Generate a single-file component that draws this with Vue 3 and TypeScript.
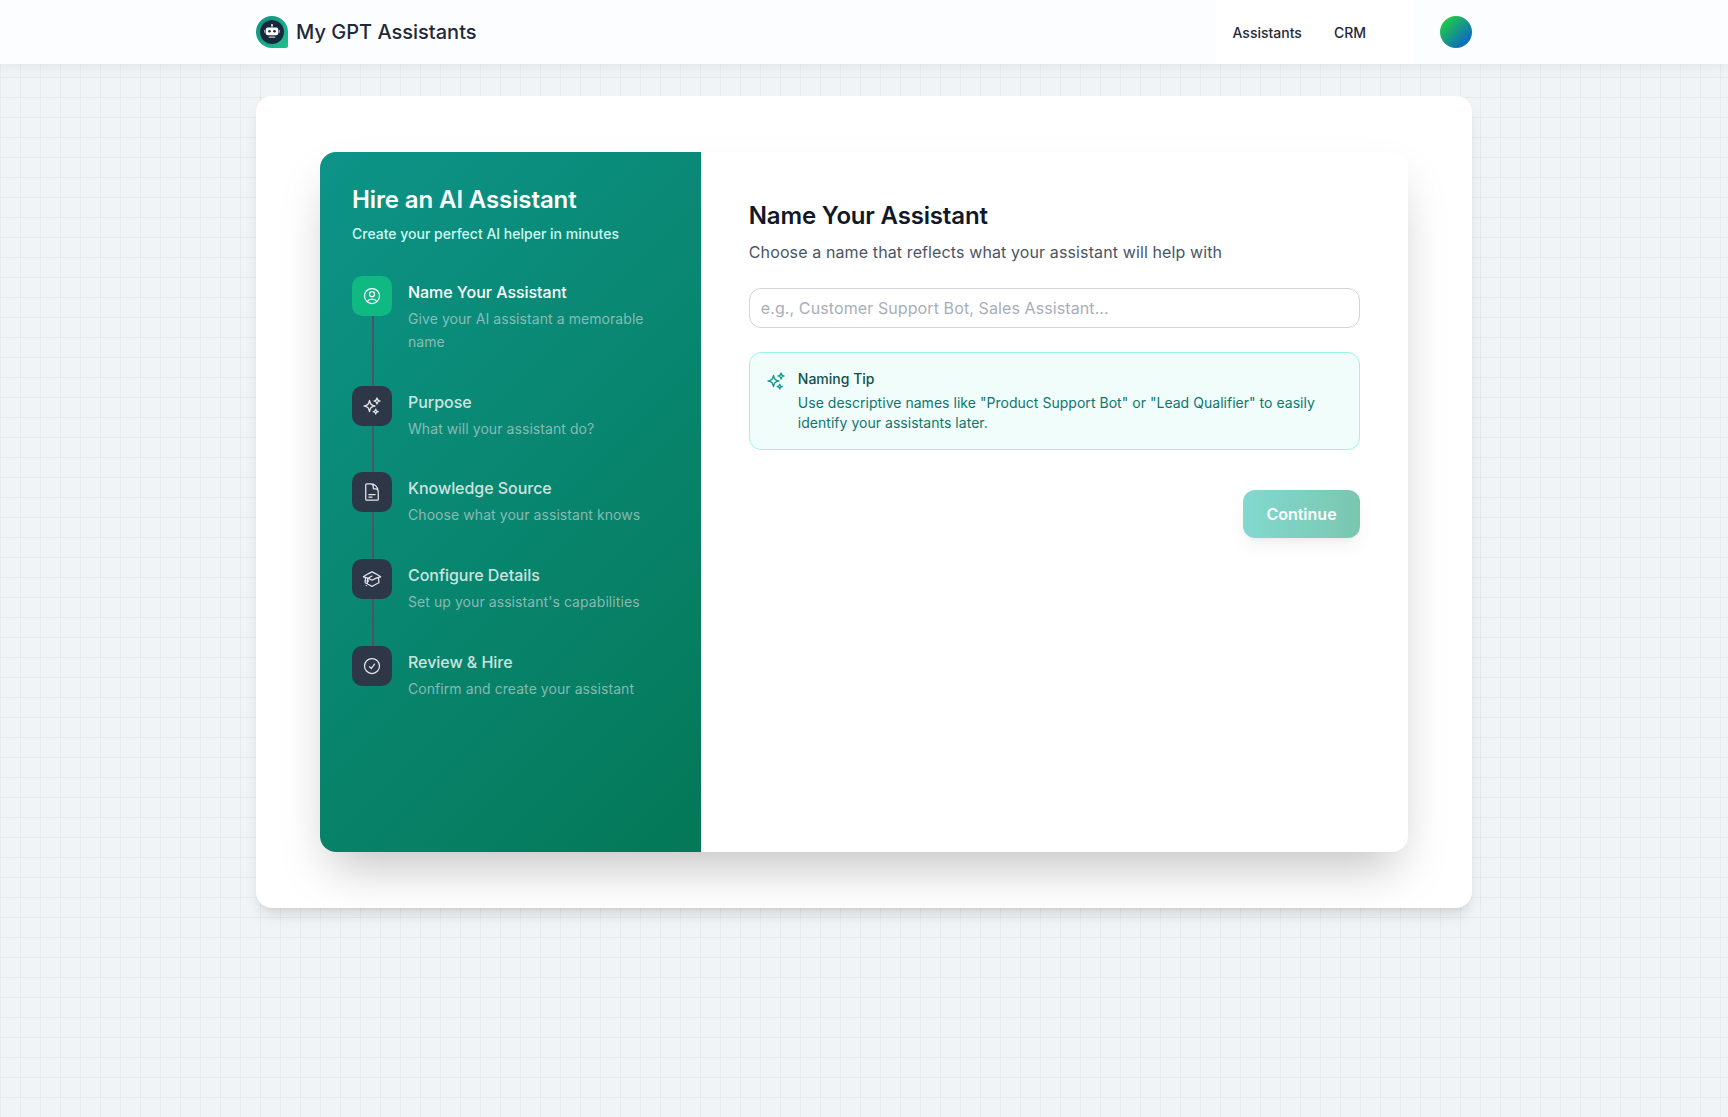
<script setup lang="ts">
interface Step {
  title: string
  desc: string
  icon: string
}

const steps: Step[] = [
  {
    title: 'Name Your Assistant',
    desc: 'Give your AI assistant a memorable name',
    icon: 'M17.982 18.725A7.488 7.488 0 0012 15.75a7.488 7.488 0 00-5.982 2.975m11.963 0a9 9 0 10-11.963 0m11.963 0A8.966 8.966 0 0112 21a8.966 8.966 0 01-5.982-2.275M15 9.75a3 3 0 11-6 0 3 3 0 016 0z',
  },
  {
    title: 'Purpose',
    desc: 'What will your assistant do?',
    icon: 'M9.813 15.904L9 18.75l-.813-2.846a4.5 4.5 0 00-3.09-3.09L2.25 12l2.846-.813a4.5 4.5 0 003.09-3.09L9 5.25l.813 2.846a4.5 4.5 0 003.09 3.09L15.75 12l-2.846.813a4.5 4.5 0 00-3.09 3.09zM18.259 8.715L18 9.75l-.259-1.035a3.375 3.375 0 00-2.455-2.456L14.25 6l1.036-.259a3.375 3.375 0 002.455-2.456L18 2.25l.259 1.035a3.375 3.375 0 002.456 2.456L21.75 6l-1.035.259a3.375 3.375 0 00-2.456 2.456zM16.894 20.567L16.5 21.75l-.394-1.183a2.25 2.25 0 00-1.423-1.423L13.5 18.75l1.183-.394a2.25 2.25 0 001.423-1.423l.394-1.183.394 1.183a2.25 2.25 0 001.423 1.423l1.183.394-1.183.394a2.25 2.25 0 00-1.423 1.423z',
  },
  {
    title: 'Knowledge Source',
    desc: 'Choose what your assistant knows',
    icon: 'M19.5 14.25v-2.625a3.375 3.375 0 00-3.375-3.375h-1.5A1.125 1.125 0 0113.5 7.125v-1.5a3.375 3.375 0 00-3.375-3.375H8.25m0 12.75h7.5m-7.5 3H12M10.5 2.25H5.625c-.621 0-1.125.504-1.125 1.125v17.25c0 .621.504 1.125 1.125 1.125h12.75c.621 0 1.125-.504 1.125-1.125V11.25a9 9 0 00-9-9z',
  },
  {
    title: 'Configure Details',
    desc: "Set up your assistant's capabilities",
    icon: 'M4.26 10.147a60.436 60.436 0 00-.491 6.347A48.627 48.627 0 0112 20.904a48.627 48.627 0 018.232-4.41 60.46 60.46 0 00-.491-6.347m-15.482 0a50.57 50.57 0 00-2.658-.813A59.905 59.905 0 0112 3.493a59.902 59.902 0 0110.399 5.84c-.896.248-1.783.52-2.658.814m-15.482 0A50.697 50.697 0 0112 13.489a50.702 50.702 0 017.74-3.342M6.75 15a.75.75 0 100-1.5.75.75 0 000 1.5zm0 0v-3.675A55.378 55.378 0 0112 8.443m-7.007 11.55A5.981 5.981 0 006.75 15.75v-1.5',
  },
  {
    title: 'Review & Hire',
    desc: 'Confirm and create your assistant',
    icon: 'M9 12.75L11.25 15 15 9.75M21 12a9 9 0 11-18 0 9 9 0 0118 0z',
  },
]
const sparkle = steps[1].icon
</script>

<template>
  <div class="page">
    <header class="header">
      <div class="header-inner">
        <div class="brand">
          <div class="logo">
            <div class="logo-core">
              <svg viewBox="0 0 24 24" width="20" height="20" fill="#fff">
                <rect x="11.4" y="3.5" width="1.2" height="3" />
                <circle cx="12" cy="3.4" r="1.1" />
                <rect x="4.5" y="6.5" width="15" height="9.5" rx="2.5" />
                <rect x="2.8" y="9.5" width="1.2" height="3.5" rx=".6" opacity=".8" />
                <rect x="20" y="9.5" width="1.2" height="3.5" rx=".6" opacity=".8" />
                <circle cx="9" cy="11" r="1.5" fill="#14293c" />
                <circle cx="15" cy="11" r="1.5" fill="#14293c" />
                <rect x="8" y="17.5" width="8" height="1.4" rx=".7" opacity=".75" />
              </svg>
            </div>
          </div>
          <span class="brand-name">My GPT Assistants</span>
        </div>
        <nav class="nav">
          <a class="nav-link">Assistants</a>
          <a class="nav-link">CRM</a>
        </nav>
        <div class="avatar"></div>
      </div>
    </header>

    <main class="main">
      <section class="outer-card">
        <div class="wizard">
          <aside class="side">
            <h1 class="side-title">Hire an AI Assistant</h1>
            <p class="side-sub">Create your perfect AI helper in minutes</p>
            <ol class="steps">
              <li
                v-for="(step, i) in steps"
                :key="step.title"
                class="step"
                :class="{ active: i === 0, last: i === steps.length - 1 }"
              >
                <div class="step-icon">
                  <svg viewBox="0 0 24 24" width="20" height="20" fill="none" stroke="currentColor" stroke-width="1.5" stroke-linecap="round" stroke-linejoin="round">
                    <path :d="step.icon" />
                  </svg>
                </div>
                <div class="step-text">
                  <div class="step-title">{{ step.title }}</div>
                  <div class="step-desc">{{ step.desc }}</div>
                </div>
              </li>
            </ol>
          </aside>

          <div class="content">
            <h2 class="content-title">Name Your Assistant</h2>
            <p class="content-sub">Choose a name that reflects what your assistant will help with</p>
            <input class="name-input" type="text" placeholder="e.g., Customer Support Bot, Sales Assistant..." />
            <div class="tip">
              <svg class="tip-icon" viewBox="0 0 24 24" width="20" height="20" fill="none" stroke="currentColor" stroke-width="1.5" stroke-linecap="round" stroke-linejoin="round">
                <path :d="sparkle" />
              </svg>
              <div>
                <div class="tip-title">Naming Tip</div>
                <p class="tip-body">Use descriptive names like "Product Support Bot" or "Lead Qualifier" to easily identify your assistants later.</p>
              </div>
            </div>
            <div class="actions">
              <button class="continue" type="button">Continue</button>
            </div>
          </div>
        </div>
      </section>
    </main>
  </div>
</template>

<style>
html, body { margin: 0; padding: 0; }
</style>

<style scoped>
* { box-sizing: border-box; }
.page {
  min-height: 1117px;
  font-family: Inter, "Liberation Sans", sans-serif;
  background-color: #f1f4f6;
  background-image:
    linear-gradient(rgba(90, 105, 125, .07) 1px, transparent 1px),
    linear-gradient(90deg, rgba(90, 105, 125, .07) 1px, transparent 1px);
  background-size: 20px 20px;
  background-position: 0 -3px, 0 0;
}
.header {
  height: 64px;
  background: #fcfdfe;
  box-shadow: 0 4px 12px rgba(0, 0, 0, .05);
  position: relative;
}
.header-inner {
  width: 1216px;
  height: 100%;
  margin: 0 auto;
  display: flex;
  align-items: center;
}
.brand { display: flex; align-items: center; gap: 8px; flex: 1; }
.logo {
  width: 32px;
  height: 32px;
  border-radius: 50% 50% 2px 50%;
  background: linear-gradient(135deg, #0f8f80, #1fc08f);
  display: flex;
  align-items: center;
  justify-content: center;
}
.logo-core {
  width: 24px;
  height: 24px;
  border-radius: 50%;
  background: #14293c;
  display: flex;
  align-items: center;
  justify-content: center;
}
.brand-name { font-size: 20px; font-weight: 500; color: #1f2937; }
.nav {
  display: flex;
  align-self: stretch;
  align-items: center;
  gap: 32px;
  padding: 0 48px 0 16px;
  background: #fff;
  margin-right: 26px;
}
.nav-link { font-size: 14px; font-weight: 500; color: #1f2937; }
.avatar {
  width: 32px;
  height: 32px;
  border-radius: 50%;
  background: linear-gradient(135deg, #22d040 10%, #0b5fd0 90%);
}
.main { width: 1216px; margin: 0 auto; padding-top: 32px; }
.outer-card {
  background: #fff;
  border-radius: 16px;
  padding: 56px 64px;
  box-shadow: 0 10px 15px -3px rgba(0, 0, 0, .1), 0 4px 6px -4px rgba(0, 0, 0, .1);
}
.wizard {
  display: flex;
  height: 700px;
  border-radius: 16px;
  overflow: hidden;
  background: #fff;
  box-shadow: 0 25px 50px -12px rgba(0, 0, 0, .25);
}
.side {
  width: 35%;
  padding: 32px;
  color: #fff;
  background: linear-gradient(135deg, #0d9488, #047857);
}
.side-title { margin: 0; font-size: 24px; line-height: 32px; font-weight: 600; letter-spacing: -.11px; }
.side-sub { margin: 8px 0 0; font-size: 14px; line-height: 20px; font-weight: 500; color: #ccfbf1; }
.steps { list-style: none; margin: 32px 0 0; padding: 0; }
.step { position: relative; display: flex; gap: 16px; padding-bottom: 32px; }
.step:not(.last)::before {
  content: "";
  position: absolute;
  left: 20px;
  top: 40px;
  bottom: 0;
  width: 2px;
  background: #4b5563;
}
.step-icon {
  flex: none;
  width: 40px;
  height: 40px;
  border-radius: 10px;
  background: #2d3748;
  color: #e5e7eb;
  display: flex;
  align-items: center;
  justify-content: center;
}
.step.active .step-icon { background: #10b981; color: #fff; }
.step-text { padding-top: 4px; }
.step-title { font-size: 16px; line-height: 24px; font-weight: 550; letter-spacing: -.04px; color: rgba(255, 255, 255, .8); }
.step.active .step-title { color: #fff; }
.step-desc { margin-top: 4px; font-size: 14px; line-height: 22.75px; letter-spacing: .07px; color: rgba(205, 215, 220, .66); }
.content { flex: 1; padding: 48px; }
.content-title { margin: 0; font-size: 24px; line-height: 32px; font-weight: 600; letter-spacing: -.17px; color: #111827; }
.content-sub { margin: 8px 0 0; font-size: 16px; line-height: 24px; letter-spacing: .115px; color: #4b5563; }
.name-input {
  display: block;
  width: 100%;
  height: 40px;
  margin-top: 24px;
  padding: 0 11px;
  border: 1px solid #d1d5db;
  border-radius: 12px;
  font: 400 16px Inter, "Liberation Sans", sans-serif;
  letter-spacing: .1px;
  color: #111827;
  background: #fff;
  outline: none;
}
.name-input::placeholder { color: #a8aeb8; opacity: 1; }
.tip {
  display: flex;
  gap: 12px;
  margin-top: 24px;
  padding: 16px;
  border: 1px solid #99f6e4;
  border-radius: 12px;
  background: #f0fdfa;
}
.tip-icon { flex: none; color: #0d9488; margin-top: 2px; }
.tip-title { font-size: 14px; line-height: 20px; font-weight: 500; color: #134e4a; }
.tip-body { margin: 4px 0 0; font-size: 14px; line-height: 20px; letter-spacing: .03px; color: #0f766e; }
.actions { display: flex; justify-content: flex-end; margin-top: 40px; }
.continue {
  width: 117px;
  height: 48px;
  border: 0;
  border-radius: 12px;
  font: 600 16px Inter, "Liberation Sans", sans-serif;
  color: #fff;
  background: linear-gradient(90deg, #14b8a6, #059669);
  opacity: .53;
  box-shadow: 0 10px 15px -3px rgba(0, 0, 0, .1), 0 4px 6px -4px rgba(0, 0, 0, .1);
}
</style>
